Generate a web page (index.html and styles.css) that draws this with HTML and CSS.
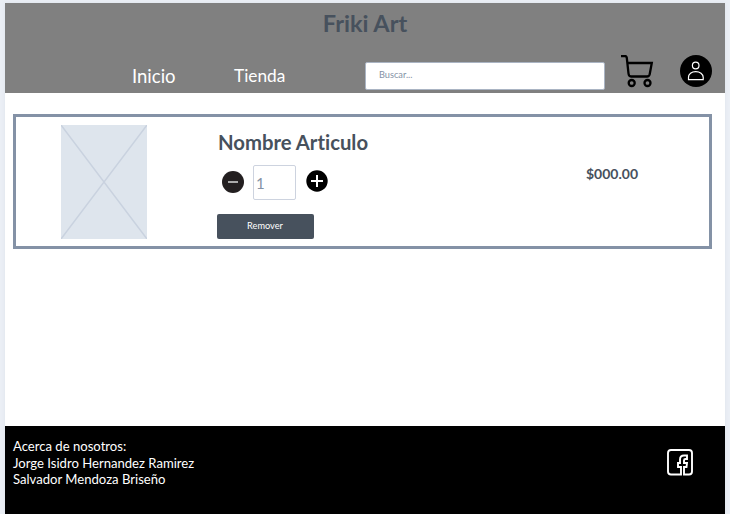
FILE: index.html
```
<!DOCTYPE html>
<html lang="es">
<head>
<meta charset="utf-8">
<title>Friki Art</title>
<link rel="stylesheet" href="styles.css">
</head>
<body>
<div class="page">
  <header class="header">
    <h1 class="brand">Friki Art</h1>
    <div class="bar">
      <nav class="nav">
        <a class="home">Inicio</a>
        <a class="shop">Tienda</a>
      </nav>
      <input class="search" type="text" placeholder="Buscar...">
      <svg class="cart" width="34" height="34" viewBox="0 0 34 34" fill="none" stroke="#000" stroke-width="2.300">
        <path d="M0 1h4q1.500 0 1.800 1.800L7.500 18.500q.3 3 2.500 3h16q2.200 0 2.700-2.200L30.800 8H6.300"/>
        <circle cx="10.700" cy="28" r="3"/><circle cx="26.500" cy="28" r="3"/>
      </svg>
      <svg class="user" width="32" height="32" viewBox="0 0 32 32">
        <circle cx="16" cy="16" r="16"/>
        <g fill="none" stroke="#fff" stroke-width="1.200"><circle cx="15.700" cy="10.500" r="3.300"/><path d="M8.500 24.700v-2.400c0-3.300 3-5.700 7.200-5.700s7.500 2.400 7.500 5.700v2.400z"/></g>
      </svg>
    </div>
  </header>
  <main class="main">
    <article class="item">
      <svg class="photo" width="86" height="114" viewBox="0 0 86 114">
        <path fill="#dee5ed" d="M0 0h86v114H0z"/>
        <path stroke="#c9d2df" stroke-width="1.500" d="M0 0l86 114M86 0L0 114"/>
      </svg>
      <div class="details">
        <h2 class="name">Nombre Articulo</h2>
        <div class="quantity">
          <svg class="minus" width="22" height="22" viewBox="0 0 22 22"><circle cx="11" cy="11" r="11" fill="#231f20"/><path stroke="#aaa" stroke-width="2" d="M6 11h10"/></svg>
          <input class="amount" type="text" value="1">
          <svg class="plus" width="22" height="22" viewBox="0 0 22 22"><circle cx="11" cy="11" r="10.700"/><path stroke="#fff" stroke-width="2" d="M5 11h12M11 5v12"/></svg>
        </div>
        <button class="remove">Remover</button>
      </div>
      <div class="price">$000.00</div>
    </article>
  </main>
  <footer class="footer">
    <div class="about">Acerca de nosotros:<br>Jorge Isidro Hernandez Ramirez<br>Salvador Mendoza Briseño</div>
    <svg class="facebook" width="26" height="27" viewBox="0 0 26 27" fill="none" stroke="#fff" stroke-width="1.900">
      <path d="M14 25.500H4q-3 0-3-3V4q0-3 3-3h18q3 0 3 3v18.500q0 3-3 3h-5V18h2.500l.5-4h-3v-2.500q0-1.500 1.500-1.500H20V6.500h-3q-4 0-4 4V14h-2v4h3z"/>
    </svg>
  </footer>
</div>
</body>
</html>
```
FILE: styles.css
```
* { box-sizing: border-box; }
body {
  margin: 0;
  padding: 3px 5px 0;
  height: 514px;
  overflow: hidden;
  background: #ebeff5;
  font-family: Lato, sans-serif;
  font-variant-ligatures: none;
  color: #47515d;
}
.page {
  display: flex;
  flex-direction: column;
  width: 720px;
  height: 511px;
  background: #fff;
  box-shadow: 0 0 4px #dde3ec;
}
.header { height: 90px; background: #808080; }
.brand {
  margin: 0;
  padding-top: 6px;
  height: 52px;
  font-size: 23.500px;
  line-height: 29px;
  text-align: center;
}
.bar { display: flex; align-items: flex-start; }
.nav {
  display: flex;
  width: 360px;
  padding-left: 127px;
  color: #fff;
  line-height: 22px;
}
.home { width: 102px; padding-top: 10px; font-size: 18.500px; }
.shop { padding-top: 10px; font-size: 17.300px; }
.search {
  width: 240px;
  height: 28px;
  margin-top: 7px;
  padding: 0 13px 3px;
  border: 1px solid #aab4c3;
  border-radius: 2px;
  background: #fff;
  font: 9.200px Lato, sans-serif;
}
.search::placeholder { color: #8492a6; opacity: 1; }
.cart { margin-left: 16px; }
.user { margin-left: 25px; }
.main { flex: 1; padding: 21px 13px 0 8px; }
.item {
  display: flex;
  height: 135px;
  border: 3px solid #8492a6;
}
.photo { margin: 8px 0 0 45px; }
.details { width: 369px; margin-left: 70px; padding-top: 13px; }
.name { margin: 0 0 0 1px; font-size: 20.300px; line-height: 24px; }
.quantity { display: flex; height: 35px; margin-top: 11px; }
.minus { margin: 6px 0 0 5px; }
.amount {
  width: 43px;
  height: 35px;
  margin-left: 9px;
  padding: 0 2px;
  border: 1px solid #cdd3df;
  border-radius: 2px;
  color: #8492a6;
  font: 15px Lato, sans-serif;
}
.plus { margin: 5px 0 0 10px; }
.remove {
  display: block;
  width: 97px;
  height: 25px;
  margin-top: 14px;
  padding: 0 1px 2px 0;
  border: 0;
  border-radius: 2px;
  background: #47515d;
  color: #fff;
  font: 9.200px Lato, sans-serif;
}
.price { padding-top: 48px; font-size: 14px; line-height: 18px; font-weight: 700; }
.footer {
  display: flex;
  justify-content: space-between;
  height: 88px;
  padding: 12px 32px 0 8px;
  background: #000;
  color: #fff;
}
.about { font-size: 13.100px; line-height: 16.5px; }
.facebook { margin-top: 11px; }
```
